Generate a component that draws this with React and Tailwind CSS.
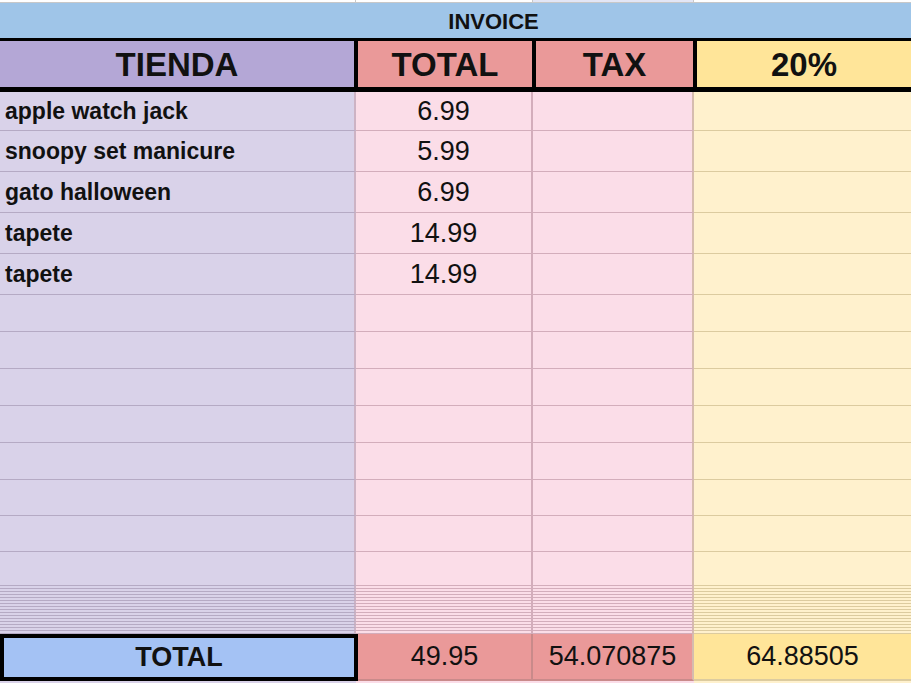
import React from 'react';

const items = [
  { name: 'apple watch jack', total: '6.99' },
  { name: 'snoopy set manicure', total: '5.99' },
  { name: 'gato halloween', total: '6.99' },
  { name: 'tapete', total: '14.99' },
  { name: 'tapete', total: '14.99' },
];

const emptyHeights = ['h-[37px]', 'h-[37px]', 'h-[37px]', 'h-[37px]', 'h-[37px]', 'h-[36px]', 'h-[36px]', 'h-[34px]'];
const stripes = Array.from({ length: 16 });

// one body row: four coloured cells with their own gridline tones
const BodyRow = ({ h, name, total }) => (
  <div className={`flex ${h}`}>
    <div className="w-[356px] shrink-0 flex items-center pl-[5px] bg-[#d9d2e9] border-b border-b-[#b5aac4] border-r-2 border-r-[#cdb3c4] text-[23px] font-bold text-[#111]">
      {name}
    </div>
    <div className="w-[177px] shrink-0 flex items-center justify-center bg-[#fbdde8] border-b border-b-[#d3adbb] border-r-2 border-r-[#d3adbb] text-[27px] text-[#111]">
      {total}
    </div>
    <div className="w-[161px] shrink-0 bg-[#fbdde8] border-b border-b-[#d3adbb] border-r-2 border-r-[#d6bcae]" />
    <div className="flex-1 bg-[#fff1cd] border-b border-b-[#dccb9f]" />
  </div>
);

const StripeRow = () => (
  <div className="flex h-[3px]">
    <div className="w-[356px] shrink-0 bg-[#d9d2e9] border-b border-b-[#b5aac4] border-r-2 border-r-[#cdb3c4]" />
    <div className="w-[177px] shrink-0 bg-[#fbdde8] border-b border-b-[#d3adbb] border-r-2 border-r-[#d3adbb]" />
    <div className="w-[161px] shrink-0 bg-[#fbdde8] border-b border-b-[#d3adbb] border-r-2 border-r-[#d6bcae]" />
    <div className="flex-1 bg-[#fff1cd] border-b border-b-[#dccb9f]" />
  </div>
);

export default function App() {
  return (
    <div className="w-[911px] h-[683px] overflow-hidden bg-white font-['Liberation_Sans',Arial,sans-serif] text-black">
      {/* top sliver of the grid */}
      <div className="flex h-[3px] border-b border-[#c8c8c8]">
        <div className="w-[356px] shrink-0 border-r border-[#c8c8c8]" />
        <div className="w-[177px] shrink-0 border-r border-[#c8c8c8]" />
        <div className="w-[161px] shrink-0 bg-[#e3e6f5] border-r border-[#c8c8c8]" />
        <div className="flex-1" />
      </div>

      {/* INVOICE band */}
      <div className="h-[35px] flex items-center justify-center bg-[#9fc5e8] text-[22px] font-bold text-[#111] pl-[76px] pt-[2px]">
        INVOICE
      </div>

      {/* Header */}
      <div className="flex h-[54px] border-t-[3px] border-b-[5px] border-black text-[33px] font-bold text-[#111]">
        <div className="w-[358px] shrink-0 flex items-center justify-center bg-[#b4a7d6] border-r-[4px] border-black pt-[2px]">TIENDA</div>
        <div className="w-[178px] shrink-0 flex items-center justify-center bg-[#ea9999] border-r-[4px] border-black pt-[2px]">TOTAL</div>
        <div className="w-[161px] shrink-0 flex items-center justify-center bg-[#ea9999] border-r-[4px] border-black pt-[2px]">TAX</div>
        <div className="flex-1 flex items-center justify-center bg-[#ffe599] pt-[2px]">20%</div>
      </div>

      {/* Items */}
      {items.map((it, i) => (
        <BodyRow key={i} h={i === 0 ? 'h-[39px]' : 'h-[41px]'} name={it.name} total={it.total} />
      ))}

      {/* Empty rows */}
      {emptyHeights.map((h, i) => (
        <BodyRow key={'e' + i} h={h} />
      ))}

      {/* Collapsed rows */}
      {stripes.map((_, i) => (
        <StripeRow key={'s' + i} />
      ))}

      {/* Totals */}
      <div className="flex h-[47px] text-[27px] text-[#111]">
        <div className="w-[358px] shrink-0 flex items-center justify-center bg-[#a4c2f4] border-[4px] border-black font-bold">TOTAL</div>
        <div className="w-[175px] shrink-0 flex items-center justify-center bg-[#ea9999] border-b-2 border-b-[#c98a8a] border-r-2 border-r-[#c98a8a]">49.95</div>
        <div className="w-[161px] shrink-0 flex items-center justify-center bg-[#ea9999] border-b-2 border-b-[#c98a8a] border-r-2 border-r-[#d6bcae]">54.070875</div>
        <div className="flex-1 flex items-center justify-center bg-[#ffe599] border-b-2 border-b-[#dccb9f]">64.88505</div>
      </div>
      <div className="flex h-[4px]">
        <div className="w-[356px] shrink-0 bg-[#d9d2e9]" />
        <div className="w-[338px] shrink-0 bg-[#fbdde8]" />
        <div className="flex-1 bg-[#fff1cd]" />
      </div>
    </div>
  );
}
